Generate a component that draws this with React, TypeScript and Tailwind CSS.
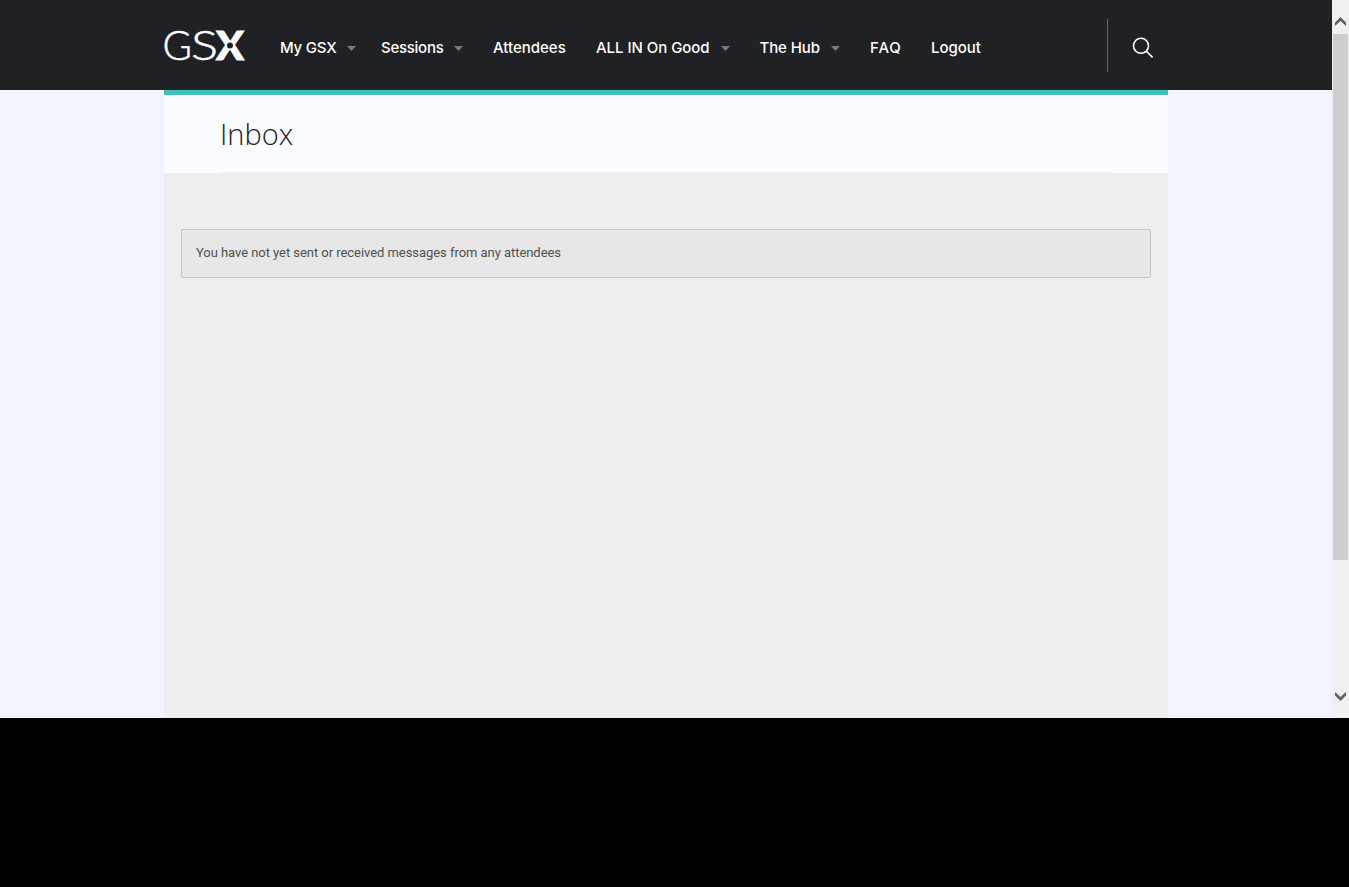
import React from "react";

type NavItem = { label: string; width: string; menu?: boolean; spacing: string };

const items: NavItem[] = [
  { label: "My GSX", width: "w-[101px]", menu: true, spacing: "w-[56px] tracking-[-0.2px]" },
  { label: "Sessions", width: "w-[112px]", menu: true, spacing: "w-[62px] tracking-[-0.27px]" },
  { label: "Attendees", width: "w-[103px]", spacing: "tracking-[0px]" },
  { label: "ALL IN On Good", width: "w-[163.5px]", menu: true, spacing: "w-[114px] tracking-[-0.04px]" },
  { label: "The Hub", width: "w-[110.5px]", menu: true, spacing: "w-[60.5px] tracking-[-0.1px]" },
  { label: "FAQ", width: "w-[61px]", spacing: "tracking-[0.9px]" },
  { label: "Logout", width: "w-[60px]", spacing: "tracking-[-0.05px]" },
];

function Logo() {
  return (
    <svg width="96" height="72" viewBox="-6 -18 96 72" className="-ml-[6px] shrink-0" aria-label="GSX">
      <g fill="#fff" stroke="#fff" fontFamily="Lato, sans-serif">
        <text x="-1.6" y="33.4" fontSize="41" fontWeight="300" strokeWidth="0.5" textLength="29.5" lengthAdjust="spacingAndGlyphs">G</text>
        <text x="27" y="33.4" fontSize="41" fontWeight="300" strokeWidth="0.5" textLength="27" lengthAdjust="spacingAndGlyphs">S</text>
        <text x="52" y="33.3" fontSize="39.5" fontWeight="900" strokeWidth="1" textLength="28" lengthAdjust="spacingAndGlyphs">X</text>
      </g>
      <circle cx="66" cy="18.4" r="4.8" fill="#fff" />
      <circle cx="66" cy="18.4" r="3" fill="#202124" />
    </svg>
  );
}

function NavLink({ item }: { item: NavItem }) {
  return (
    <a className={`flex shrink-0 items-center whitespace-nowrap ${item.width}`}>
      <span className={item.spacing}>{item.label}</span>
      {item.menu && (
        <svg className="mt-px ml-[11px] shrink-0" width="9" height="5" viewBox="0 0 9 5">
          <path d="M0 0h9L4.5 5z" fill="#7b7b7d" />
        </svg>
      )}
    </a>
  );
}

function Scrollbar() {
  return (
    <div className="flex w-[17px] shrink-0 flex-col items-center bg-[#f0f0f0]">
      <div className="flex h-[34px] w-full justify-center pt-[17px]">
        <svg width="11" height="9" viewBox="0 0 11 9"><path d="M0 5.5 5.5 0 11 5.5V9L5.5 4 0 9z" fill="#606060" /></svg>
      </div>
      <div className="h-[526px] w-[15px] bg-[#cdcdcd]" />
      <div className="mt-auto mb-[17px]">
        <svg className="block" width="11" height="9" viewBox="0 0 11 9"><path d="M0 3.5 5.5 9 11 3.5V0L5.5 5 0 0z" fill="#606060" /></svg>
      </div>
    </div>
  );
}

export default function App() {
  return (
    <div className="h-[887px] w-[1349px] overflow-hidden bg-black font-['Roboto',sans-serif]">
      <div className="flex h-[718px]">
        <div className="flex w-[1332px] flex-col bg-[#f1f4ff]">
          <header className="h-[90px] shrink-0 bg-[#202124]">
            <div className="mx-auto flex h-full w-[1004px] items-center">
              <div className="w-[116px] shrink-0"><Logo /></div>
              <nav className="flex pt-[5px] font-['Inter',sans-serif] text-[15px] leading-6 font-medium text-white">
                {items.map((item) => <NavLink key={item.label} item={item} />)}
              </nav>
              <div className="ml-auto flex h-[53px] w-[61px] shrink-0 items-center border-l border-[#66676a] pl-6">
                <svg className="mt-[5px]" width="22" height="22" viewBox="0 0 22 22" fill="none" stroke="#fff" strokeWidth="1.6">
                  <circle cx="9" cy="8.8" r="7.5" />
                  <path d="m14.3 14.2 6.3 6.2" />
                </svg>
              </div>
            </div>
          </header>
          <main className="mx-auto w-[1004px] flex-1 bg-[#eee]">
            <div className="h-[83px] border-t-[5px] border-[#40bfbc] bg-[#fbfcff] px-14">
              <h1 className="flex h-[78px] items-center border-b border-[#f0f0f3] pt-px font-['Open_Sans',sans-serif] text-[29px] font-light text-[#202124]">Inbox</h1>
            </div>
            <div className="px-[17px] pt-14">
              <p className="flex h-[49px] items-center rounded-[2px] border border-[#c6c6c6] bg-[#e7e7e7] px-[14px] pb-px text-[13px] tracking-[-0.05px] text-[#505050]">
                You have not yet sent or received messages from any attendees
              </p>
            </div>
          </main>
        </div>
        <Scrollbar />
      </div>
    </div>
  );
}
